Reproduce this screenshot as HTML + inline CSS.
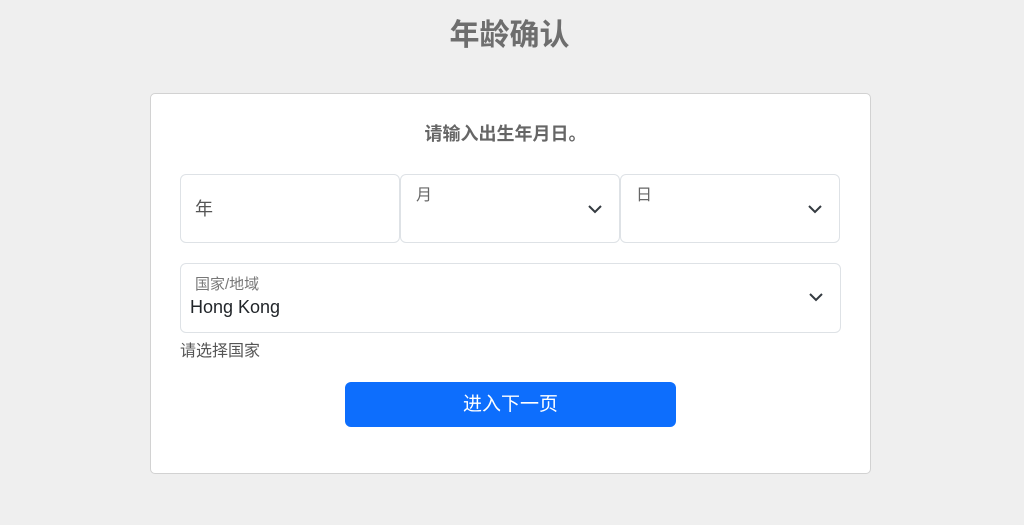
<!DOCTYPE html>
<html><head><meta charset="utf-8"><style>
*{margin:0;padding:0;box-sizing:border-box}
body{width:1024px;height:525px;background:#efefef;font-family:"Liberation Sans","Noto Sans CJK SC",sans-serif;position:relative;overflow:hidden}
.a{position:absolute}
.t{left:0;width:1019px;text-align:center;top:16px;font-size:30px;font-weight:bold;color:#6e6e6e;line-height:40px}
.card{left:150px;top:93px;width:721px;height:381px;background:#fff;border:1px solid #d2d2d2;border-radius:5px}
.sub{left:150px;width:711px;text-align:center;top:121px;font-size:18px;font-weight:bold;color:#666;line-height:26px}
.box{background:#fff;border:1px solid #dee2e6;border-radius:6px}
.lbl{font-size:16px;color:#666;line-height:20px}
.chev{width:16px;height:16px}
.btn{left:345px;top:382px;width:331px;height:45px;background:#0d6efd;border-radius:6px;color:#fff;font-size:19px;text-align:center;line-height:45px}
</style></head><body>
<div class="a t">年龄确认</div>
<div class="a card"></div>
<div class="a sub">请输入出生年月日。</div>
<div class="a box" style="left:180px;top:174px;width:220px;height:69px"></div>
<div class="a box" style="left:400px;top:174px;width:220px;height:69px"></div>
<div class="a box" style="left:620px;top:174px;width:220px;height:69px"></div>
<div class="a" style="left:195px;top:198px;font-size:18px;color:#555;line-height:22px">年</div>
<div class="a lbl" style="left:416px;top:186px">月</div>
<div class="a lbl" style="left:636px;top:186px">日</div>
<svg class="a chev" style="left:587px;top:201px" viewBox="0 0 16 16"><path d="M2 5l6 6 6-6" fill="none" stroke="#343a40" stroke-width="2"/></svg>
<svg class="a chev" style="left:807px;top:201px" viewBox="0 0 16 16"><path d="M2 5l6 6 6-6" fill="none" stroke="#343a40" stroke-width="2"/></svg>
<div class="a box" style="left:180px;top:263px;width:661px;height:70px"></div>
<div class="a" style="left:195px;top:275px;font-size:15px;color:#777;line-height:20px">国家/地域</div>
<div class="a" style="left:190px;top:296px;font-size:18px;color:#212529;line-height:22px">Hong Kong</div>
<svg class="a chev" style="left:808px;top:289px" viewBox="0 0 16 16"><path d="M2 5l6 6 6-6" fill="none" stroke="#343a40" stroke-width="2"/></svg>
<div class="a" style="left:180px;top:342px;font-size:16px;color:#555;line-height:20px">请选择国家</div>
<div class="a btn">进入下一页</div>
</body></html>
